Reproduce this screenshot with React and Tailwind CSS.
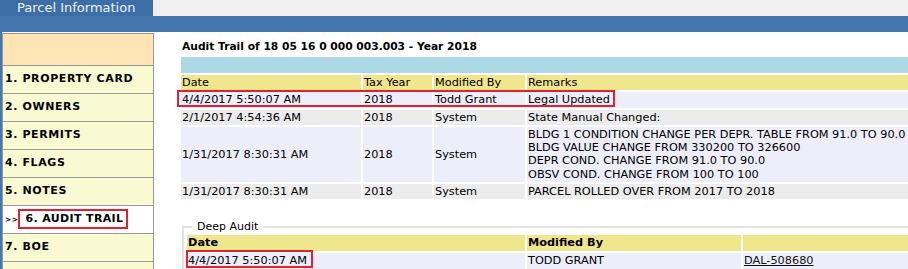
import React from "react";

const NAV = [
  "1. PROPERTY CARD",
  "2. OWNERS",
  "3. PERMITS",
  "4. FLAGS",
  "5. NOTES",
  "6. AUDIT TRAIL",
  "7. BOE",
  "",
];

const ROWS = [
  { date: "4/4/2017 5:50:07 AM", year: "2018", by: "Todd Grant", remarks: ["Legal Updated"], bg: "bg-[#eeeefa]" },
  { date: "2/1/2017 4:54:36 AM", year: "2018", by: "System", remarks: ["State Manual Changed:"], bg: "bg-[#ececec]" },
  {
    date: "1/31/2017 8:30:31 AM",
    year: "2018",
    by: "System",
    remarks: [
      "BLDG 1 CONDITION CHANGE PER DEPR. TABLE FROM 91.0 TO 90.0",
      "BLDG VALUE CHANGE FROM 330200 TO 326600",
      "DEPR COND. CHANGE FROM 91.0 TO 90.0",
      "OBSV COND. CHANGE FROM 100 TO 100",
    ],
    bg: "bg-[#eeeefa]",
  },
  { date: "1/31/2017 8:30:31 AM", year: "2018", by: "System", remarks: ["PARCEL ROLLED OVER FROM 2017 TO 2018"], bg: "bg-[#ececec]" },
];

function Sidebar() {
  return (
    <div className="mt-px w-[152px] shrink-0 border border-[#999] text-[11px] font-bold tracking-[0.6px] text-black">
      <div className="h-[31px] bg-[#ffe4b5]" />
      {NAV.map((item) => {
        const active = item === "6. AUDIT TRAIL";
        return (
          <div
            key={item || "blank"}
            className={`flex h-7 items-center border-t border-[#999] pl-[2px] ${active ? "bg-white" : "bg-[#fafad2]"}`}
          >
            {active && <span className="mr-[7px] text-[7.5px] tracking-[0.5px]">&gt;&gt;</span>}
            {active ? <span className="tracking-[0.35px]">{item}</span> : item}
          </div>
        );
      })}
    </div>
  );
}

function AuditTable() {
  return (
    <table className="w-[760px] table-fixed border-separate border-spacing-[2px] text-[11.3px] text-black">
      <colgroup>
        <col className="w-[180px]" />
        <col className="w-[69px]" />
        <col className="w-[91px]" />
        <col />
      </colgroup>
      <tbody>
        <tr>
          <td colSpan={4} className="h-4 bg-[#add8e6]" />
        </tr>
        <tr className="bg-[#f0e68c]">
          {["Date", "Tax Year", "Modified By", "Remarks"].map((h) => (
            <td key={h} className="px-px py-px leading-[13.25px]">{h}</td>
          ))}
        </tr>
        {ROWS.map((r, i) => (
          <tr key={i} className={r.bg}>
            <td className="px-px py-px leading-[13.25px]">{r.date}</td>
            <td className="px-px py-px leading-[13.25px]">{r.year}</td>
            <td className="px-px py-px leading-[13.25px]">{r.by}</td>
            <td className="px-px py-px leading-[13.25px] whitespace-nowrap">
              {r.remarks.map((line) => (
                <div key={line}>{line}</div>
              ))}
            </td>
          </tr>
        ))}
      </tbody>
    </table>
  );
}

function DeepAudit() {
  return (
    <fieldset className="ml-[3px] mt-[20px] w-[760px] border-2 border-[#e3e3e3] pl-px">
      <legend className="ml-[7px] px-[5px] text-[11px] leading-[12px] text-black">Deep Audit</legend>
      <table className="w-[740px] table-fixed border-separate border-spacing-[2px] text-[11.3px] text-black">
        <colgroup>
          <col className="w-[338px]" />
          <col className="w-[214px]" />
          <col />
        </colgroup>
        <tbody>
          <tr className="bg-[#f0e68c] font-bold">
            <td className="px-px py-px leading-[14px]">Date</td>
            <td className="px-px py-px leading-[14px]">Modified By</td>
            <td className="px-px py-px leading-[14px]" />
          </tr>
          <tr className="bg-[#eeeefa]">
            <td className="px-px py-px leading-[14px]">4/4/2017 5:50:07 AM</td>
            <td className="px-px py-px leading-[14px]">TODD GRANT</td>
            <td className="px-px py-px leading-[14px]">
              <a href="#" className="text-[#111] underline">DAL-508680</a>
            </td>
          </tr>
        </tbody>
      </table>
    </fieldset>
  );
}

export default function App() {
  return (
    <div className="relative h-[269px] w-[908px] overflow-hidden bg-white font-['DejaVu_Sans',Verdana,sans-serif]">
      {/* top tab row */}
      <div className="flex h-4">
        <div className="w-[153px] bg-[#3d6ea6] pl-[17px] text-[13px] leading-4 text-[#eef3f8]">Parcel Information</div>
        <div className="flex-1 bg-[#f0f0f0]" />
      </div>
      <div className="h-4 bg-[#4676ae]" />

      <div className="flex">
        <div className="w-[2px] shrink-0 self-stretch bg-[#4676ae]" />
        <Sidebar />
        <div className="ml-[25px] pt-[8px]">
          <div className="pl-[3px] text-[10.7px] font-bold leading-[13px] text-black">
            Audit Trail of 18 05 16 0 000 003.003 - Year 2018
          </div>
          <div className="mt-[2px]">
            <AuditTable />
          </div>
          <DeepAudit />
        </div>
      </div>

      {/* red highlight annotations */}
      <div className="absolute left-[177px] top-[90px] h-[17px] w-[438px] border-2 border-[#e5202e]" />
      <div className="absolute left-[18px] top-[209px] h-[20px] w-[110px] border-2 border-[#e5202e]" />
      <div className="absolute left-[186px] top-[250px] h-[18px] w-[127px] border-2 border-[#e5202e]" />
    </div>
  );
}
